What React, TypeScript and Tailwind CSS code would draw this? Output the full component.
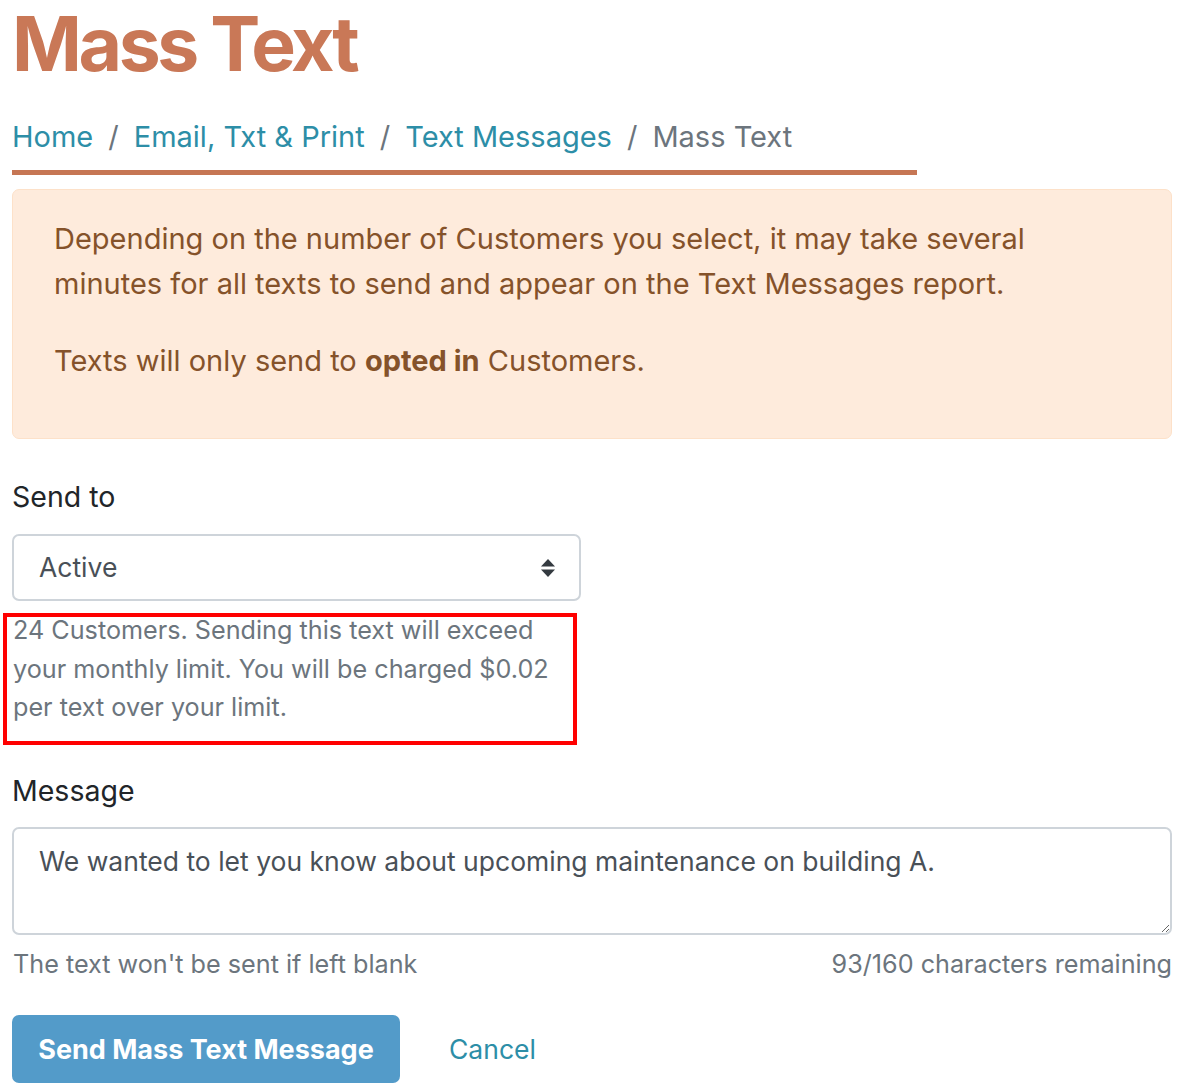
import React from "react";

const crumbs = ["Home", "Email, Txt & Print", "Text Messages"];

const SelectArrows = () => (
  <svg width="16" height="20" viewBox="0 0 16 20" className="text-[#343a40]">
    <path d="M1 8.5 L8 1 L15 8.5 Z" fill="currentColor" />
    <path d="M1 11.5 L8 19 L15 11.5 Z" fill="currentColor" />
  </svg>
);

export default function App() {
  return (
    <div className="min-h-screen bg-white pl-3 pr-4 font-['Inter',sans-serif] text-[#212529]">
      {/* page title */}
      <h1 className="pt-[6px] text-[75px] leading-[75px] font-bold tracking-[-0.045em] text-[#c97857]">Mass Text</h1>

      {/* breadcrumb */}
      <nav className="mt-[33px] flex items-center text-[29px] leading-[45px]">
        {crumbs.map((c) => (
          <React.Fragment key={c}>
            <span className="text-[#2d8ea7]">{c}</span>
            <span className="px-[15px] text-[#6c757d]">/</span>
          </React.Fragment>
        ))}
        <span className="text-[#6c757d]">Mass Text</span>
      </nav>
      <div className="mt-[11px] h-[5px] w-[905px] bg-[#c67654]" />

      {/* alert */}
      <div className="mt-[14px] rounded-[7px] border border-[#fde1c9] bg-[#feebdc] pl-[41px] pr-6 pt-[26px] pb-[55px] text-[29px] leading-[45px] text-[#85522a]">
        <p>
          Depending on the number of Customers you select, it may take several
          <br />
          minutes for all texts to send and appear on the Text Messages report.
        </p>
        <p className="mt-[32px]">
          Texts will only send to <strong className="font-bold">opted in</strong> Customers.
        </p>
      </div>

      {/* send to */}
      <label className="mt-[35px] block text-[28.5px] leading-[45px]">Send to</label>
      <div className="mt-[15px] flex h-[67px] w-[569px] items-center justify-between rounded-[7px] border-2 border-[#ced4da] pl-[25px] pr-[23px] text-[26.5px] text-[#495057]">
        <span>Active</span>
        <SelectArrows />
      </div>

      <div className="relative mt-[10px] w-[569px]">
        <p className="pl-px pr-4 text-[25.2px] leading-[38.5px] text-[#6c757d]">
          24 Customers. Sending this text will exceed your monthly limit. You will be charged $0.02 per text over your limit.
        </p>
        <div className="pointer-events-none absolute -left-[9px] top-[2px] h-[132px] w-[574px] border-4 border-[#ff0000]" />
      </div>

      {/* message */}
      <label className="mt-[41px] block text-[28.5px] leading-[45px]">Message</label>
      <textarea
        readOnly
        defaultValue="We wanted to let you know about upcoming maintenance on building A."
        className="mt-[14px] block h-[108px] w-full resize-y rounded-[7px] border-2 border-[#ced4da] px-[25px] pt-[10px] text-[26.5px] leading-[45px] text-[#495057] outline-none"
      />
      <div className="mt-[10px] flex justify-between text-[25.2px] leading-[39px] text-[#6c757d]">
        <span className="pl-px">The text won't be sent if left blank</span>
        <span>93/160 characters remaining</span>
      </div>

      {/* actions */}
      <div className="mt-[31px] flex items-center">
        <button className="h-[68px] w-[388px] rounded-[7px] bg-[#539bc9] pt-[3px] text-[27px] font-bold text-white">
          Send Mass Text Message
        </button>
        <span className="ml-[49px] pt-[3px] text-[26.5px] text-[#2d8ea7]">Cancel</span>
      </div>
    </div>
  );
}
